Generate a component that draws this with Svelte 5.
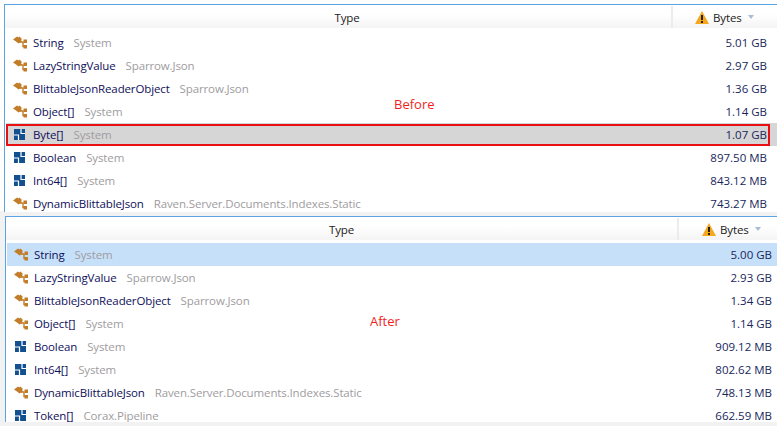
<script lang="ts">
	const before = [
		{ icon: 'cls', name: 'String', ns: 'System', size: '5.01 GB' },
		{ icon: 'cls', name: 'LazyStringValue', ns: 'Sparrow.Json', size: '2.97 GB' },
		{ icon: 'cls', name: 'BlittableJsonReaderObject', ns: 'Sparrow.Json', size: '1.36 GB' },
		{ icon: 'cls', name: 'Object[]', ns: 'System', size: '1.14 GB' },
		{ icon: 'val', name: 'Byte[]', ns: 'System', size: '1.07 GB', marked: true },
		{ icon: 'val', name: 'Boolean', ns: 'System', size: '897.50 MB' },
		{ icon: 'val', name: 'Int64[]', ns: 'System', size: '843.12 MB' },
		{ icon: 'cls', name: 'DynamicBlittableJson', ns: 'Raven.Server.Documents.Indexes.Static', size: '743.27 MB' }
	];

	const after = [
		{ icon: 'cls', name: 'String', ns: 'System', size: '5.00 GB', selected: true },
		{ icon: 'cls', name: 'LazyStringValue', ns: 'Sparrow.Json', size: '2.93 GB' },
		{ icon: 'cls', name: 'BlittableJsonReaderObject', ns: 'Sparrow.Json', size: '1.34 GB' },
		{ icon: 'cls', name: 'Object[]', ns: 'System', size: '1.14 GB' },
		{ icon: 'val', name: 'Boolean', ns: 'System', size: '909.12 MB' },
		{ icon: 'val', name: 'Int64[]', ns: 'System', size: '802.62 MB' },
		{ icon: 'cls', name: 'DynamicBlittableJson', ns: 'Raven.Server.Documents.Indexes.Static', size: '748.13 MB' },
		{ icon: 'val', name: 'Token[]', ns: 'Corax.Pipeline', size: '662.59 MB' }
	];

	const panels = [
		{ id: 'before', label: 'Before', rows: before },
		{ id: 'after', label: 'After', rows: after }
	];
</script>

{#each panels as panel}
	<section class="panel {panel.id}">
		<header>
			<div class="type">Type</div>
			<div class="bytes">
				<svg width="14" height="13" viewBox="0 0 14 13">
					<path d="M7 0 L14 13 L0 13 Z" fill="#f5a81c" />
					<rect x="6" y="4" width="2" height="5" fill="#222" />
					<rect x="6" y="10" width="2" height="2" fill="#222" />
				</svg>
				<span>Bytes</span>
				<i class="caret"></i>
			</div>
		</header>
		<div class="rows">
			{#each panel.rows as row}
				<div class="row" class:marked={row.marked} class:selected={row.selected}>
					{#if row.icon === 'cls'}
						<svg class="icon" width="16" height="14" viewBox="0 0 16 14">
							<path d="M0 3.5 L4 0.5 L5.5 1.5 L6.5 0.5 L9 3 L8 4 L9 5.5 L5.5 7.5 L3 5.5 Z" fill="#c27d28" />
							<path d="M7 6 H10 V10.5 H12" fill="none" stroke="#c27d28" stroke-width="1.4" />
							<rect x="10.5" y="3.5" width="3.5" height="3.5" fill="#c27d28" />
							<rect x="10.5" y="9" width="3.5" height="3.5" fill="#c27d28" />
						</svg>
					{:else}
						<svg class="icon" width="16" height="14" viewBox="0 0 16 14">
							<rect x="1" y="1" width="11" height="11" fill="#12508f" />
							<path d="M8 1 V5.5 H12 M1 7 H5.5 V12" fill="none" stroke="#fff" stroke-width="1.2" />
						</svg>
					{/if}
					<span class="name">{row.name}</span>
					<span class="ns">{row.ns}</span>
					<span class="size">{row.size}</span>
				</div>
			{/each}
		</div>
		<div class="label">{panel.label}</div>
	</section>
{/each}

<style>
	:global(body) {
		margin: 0;
		background: #fff;
	}

	.panel {
		position: relative;
		box-sizing: border-box;
		width: 777px;
		font-family: "Open Sans", "Noto Sans", sans-serif;
		font-size: 11.5px;
		letter-spacing: -0.13px;
		overflow: hidden;
	}

	.before {
		height: 216px;
		padding: 4px 0 0 4px;
		background: linear-gradient(#fff 211px, #f2f2f2 211px);
	}

	.after {
		height: 210px;
		padding-left: 5px;
		background: #f2f2f2;
	}

	header {
		display: flex;
		height: 24px;
		padding-top: 1px;
		border-top: 1px solid #5ca3e6;
		border-left: 1px solid #5ca3e6;
		background: linear-gradient(#fff 40%, #f4f4f4);
		color: #222;
		box-sizing: border-box;
	}

	.type {
		flex: 1;
		text-align: center;
		line-height: 24px;
		border-right: 2px solid #ececec;
	}

	.before .type {
		padding-left: 18px;
	}

	.bytes {
		display: flex;
		align-items: center;
		gap: 4px;
		padding-left: 22px;
		box-sizing: border-box;
	}

	.before .bytes {
		width: 104px;
	}

	.after .bytes {
		width: 98px;
		padding-left: 23px;
	}

	.caret {
		margin-left: 2px;
		border: 3.5px solid transparent;
		border-top: 4px solid #a9bdd2;
		border-bottom: 0;
	}

	.rows {
		box-sizing: border-box;
		border-left: 1px solid #5ca3e6;
		padding-top: 3px;
		background: #fff;
		overflow: hidden;
	}

	.before .rows {
		height: 184px;
	}

	.after .rows {
		height: 182px;
	}

	.row {
		position: relative;
		display: flex;
		align-items: center;
		box-sizing: border-box;
		height: 23px;
		margin-left: 1px;
		padding: 0 10px 0 7px;
		color: #0f0f5a;
		line-height: 13px;
	}

	.after .row {
		padding-right: 5px;
	}

	.marked {
		background: #d6d6d6;
	}

	.marked::after {
		content: "";
		position: absolute;
		inset: 1px 7px 0 0;
		border: 2px solid #e81010;
	}

	.selected {
		background: #c6e0fa;
	}

	.icon {
		margin-right: 4px;
		flex: none;
	}

	.ns {
		margin-left: 10px;
		color: #a09ca0;
	}

	.size {
		margin-left: auto;
		color: #18265c;
		letter-spacing: 0;
	}

	.label {
		position: absolute;
		color: #f01f1f;
		font-size: 13px;
		letter-spacing: 0;
	}

	.before .label {
		left: 394px;
		top: 95px;
	}

	.after .label {
		left: 370px;
		top: 96px;
	}
</style>
